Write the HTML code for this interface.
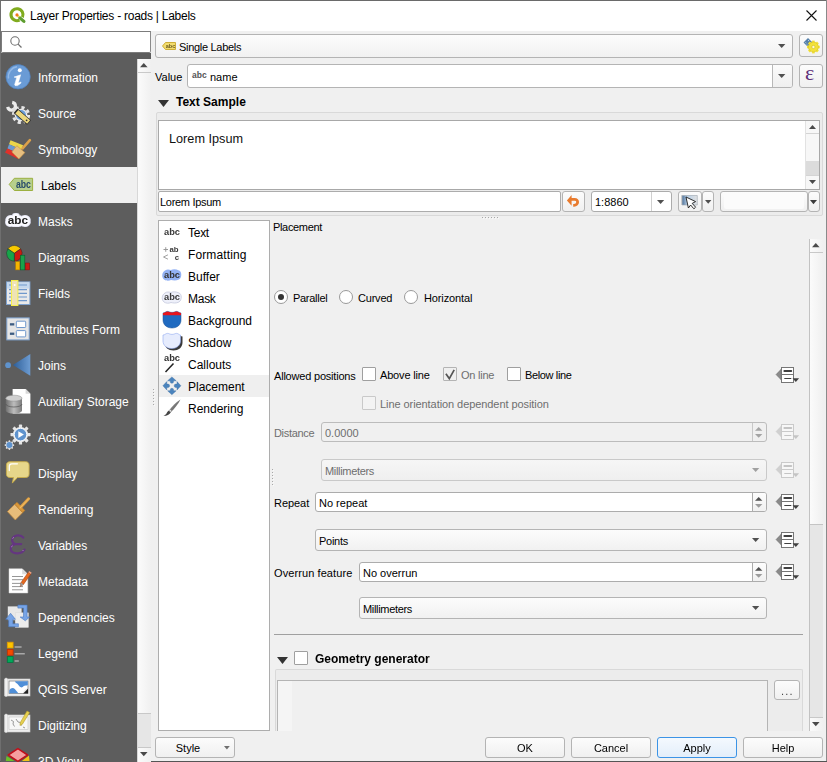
<!DOCTYPE html><html><head><meta charset="utf-8"><style>
*{box-sizing:border-box;margin:0;padding:0}
html,body{width:827px;height:762px;overflow:hidden;background:#6a6a6a}
body{font-family:"Liberation Sans",sans-serif;font-size:11px;color:#000;position:relative}
.a{position:absolute}
.t{position:absolute;white-space:nowrap;line-height:1}
.field{position:absolute;background:#fff;border:1px solid #acacac;border-radius:2px}
.combo{position:absolute;background:linear-gradient(#fcfcfc,#f1f1f1);border:1px solid #b4b4b4;border-radius:3px}
.btn{position:absolute;background:linear-gradient(#fcfcfc,#f0f0f0);border:1px solid #b4b4b4;border-radius:3px}
.dd{position:absolute;width:0;height:0;border-left:4.5px solid transparent;border-right:4.5px solid transparent;border-top:5px solid #3c3c3c}
.cb{position:absolute;width:14px;height:14px;background:#fff;border:1px solid #9f9f9f;border-radius:1px}
.rb{position:absolute;width:14px;height:14px;background:#fff;border:1px solid #9a9a9a;border-radius:50%}
.dis{color:#8d8d8d}
svg{position:absolute;overflow:visible;will-change:transform}
</style></head><body>
<div class="a" style="left:0px;top:1px;width:827px;height:760px;background:#f0f0f0"></div>
<div class="a" style="left:0px;top:1px;width:1px;height:761px;background:#6f6f6f"></div>
<div class="a" style="left:826px;top:0px;width:1px;height:762px;background:#8a8a8a"></div>
<div class="a" style="left:0px;top:761px;width:827px;height:1px;background:#555"></div>
<div class="a" style="left:1px;top:1px;width:825px;height:30px;background:#fff"></div>
<svg style="left:9px;top:8px" width="17" height="17" viewBox="0 0 17 17"><path d="M10.54 12.14A6 6 0 1 1 13.44 9.24" stroke="#80ab1e" stroke-width="3.1" fill="none"/><path d="M10.6 9.6L14.9 13.4" stroke="#5e9e30" stroke-width="3.2" stroke-linecap="round"/><circle cx="9.3" cy="8.3" r="1.2" fill="#e8e070"/><circle cx="8" cy="6.9" r="1.6" fill="#f07a1a"/></svg>
<div class="t" style="left:30px;top:10px;font-size:12px;letter-spacing:-0.25px">Layer Properties - roads | Labels</div>
<svg style="left:806px;top:10px" width="11" height="11" viewBox="0 0 11 11"><path d="M0.5 0.5L10.5 10.5M10.5 0.5L0.5 10.5" stroke="#111" stroke-width="1.1"/></svg>
<div class="a" style="left:1px;top:31px;width:150px;height:22px;background:#fff;border:1px solid #7c7c7c;border-right-color:#8a8a8a;border-radius:0 0 2px 2px"></div>
<svg style="left:9px;top:35px" width="14" height="14" viewBox="0 0 14 14"><circle cx="6" cy="6" r="4.2" fill="none" stroke="#707070" stroke-width="1.1"/><path d="M9.1 9.1l3.4 3.4" stroke="#707070" stroke-width="1.3"/></svg>
<div class="a" style="left:1px;top:53px;width:150px;height:709px;background:#5d5d5d"></div>
<div class="a" style="left:137px;top:59px;width:14px;height:703px;background:linear-gradient(90deg,#fbfbfb,#f0f0f0);border-left:1px solid #d8d8d8"></div>
<div class="a" style="left:138px;top:72px;width:13px;height:1px;background:#c9c9c9"></div>
<svg style="left:140.2px;top:62.8px" width="7.6" height="4.2" viewBox="0 0 7.6 4.2"><path d="M0 4.2L3.8 0L7.6 4.2z" fill="#4a4a4a"/></svg>
<div class="a" style="left:138px;top:713px;width:13px;height:35px;background:#e6e6e6;border-top:1px solid #c8c8c8;border-bottom:1px solid #c8c8c8"></div>
<svg style="left:140.2px;top:751.5px" width="7.6" height="4.2" viewBox="0 0 7.6 4.2"><path d="M0 0L3.8 4.2L7.6 0z" fill="#4a4a4a"/></svg>
<svg style="left:6px;top:64px" width="25" height="25" viewBox="0 0 25 25"><circle cx="12.1" cy="12.8" r="12.2" fill="#6a9bd5" stroke="#4f7fbb" stroke-width="0.7"/><path d="M2.6 14.5A9.8 9.8 0 0 1 11 2.8" stroke="#92b8e6" stroke-width="1.4" fill="none"/><circle cx="13.8" cy="6.3" r="2" fill="#fff"/><path d="M8 13.1L14.7 10.8 12.3 18.9 15.1 18 14.6 19.4 11.6 21.6 9.3 21.7 8.6 20.7 10.7 13.7z" fill="#fff" stroke="#fff" stroke-width="0.5" stroke-linejoin="round"/></svg>
<div class="t" style="left:38px;top:72px;font-size:12px;color:#fff">Information</div>
<svg style="left:6px;top:100px" width="25" height="25" viewBox="0 0 25 25"><circle cx="15" cy="15" r="7.6" fill="none" stroke="#e6e6e6" stroke-width="3" stroke-dasharray="3.2 2.8"/><circle cx="15" cy="15" r="6.3" fill="#ebebeb"/><circle cx="15" cy="15" r="5" fill="#6d9fd9"/><path d="M6.2 2.3A3.9 3.9 0 1 1 1.7 6.9" stroke="#ececec" stroke-width="3.2" fill="none"/><path d="M7 8.5l3 3" stroke="#e0e0e0" stroke-width="3.4"/><path d="M9.6 10.8l13.4 11.6" stroke="#2a2a2a" stroke-width="6"/><path d="M10.8 11.8l11.8 10.2" stroke="#ecd77c" stroke-width="4.6"/><circle cx="20.6" cy="20.3" r="0.9" fill="#333"/></svg>
<div class="t" style="left:38px;top:108px;font-size:12px;color:#fff">Source</div>
<svg style="left:6px;top:136px" width="25" height="25" viewBox="0 0 25 25"><path d="M4.5 4.2L17.1 9.2 15.5 13.8 3 8.3z" fill="#ecd64a"/><path d="M3 8.3L15.5 13.8 14 18.3 1.5 12.5z" fill="#6e9ad0"/><path d="M1.5 12.5L14 18.3 12.4 22.9-1 16.6z" fill="#e0302a"/><path d="M10.8 9.7L18.9 16.6 12.9 22.9 5.8 16z" fill="#e6bf80" stroke="#c89040" stroke-width="0.6"/><path d="M16.6 12.4L23.9 4.2" stroke="#dba04a" stroke-width="2.6" stroke-linecap="round"/></svg>
<div class="t" style="left:38px;top:144px;font-size:12px;color:#fff">Symbology</div>
<div class="a" style="left:1px;top:167px;width:136px;height:36px;background:#f0f0f0"></div>
<svg style="left:6px;top:172px" width="25" height="25" viewBox="0 0 25 25"><path d="M8.3 6.3h18.3v12.2H8.3L3.2 12.4z" fill="#b7cf8c" stroke="#9cb040" stroke-width="1"/><text x="17.4" y="16.3" font-family="Liberation Sans" font-weight="bold" font-size="10.5" fill="#264a6a" text-anchor="middle" textLength="15" lengthAdjust="spacingAndGlyphs">abc</text></svg>
<div class="t" style="left:41px;top:180px;font-size:12px;color:#000">Labels</div>
<svg style="left:6px;top:208px" width="25" height="25" viewBox="0 0 25 25"><text x="1.7" y="15.6" font-family="Liberation Sans" font-weight="bold" font-size="11.5" fill="#fff" stroke="#dfe0f0" stroke-width="6" stroke-linejoin="round" textLength="20.3" lengthAdjust="spacingAndGlyphs">abc</text><text x="1.7" y="15.6" font-family="Liberation Sans" font-weight="bold" font-size="11.5" fill="#fff" stroke="#fafaff" stroke-width="4.4" stroke-linejoin="round" textLength="20.3" lengthAdjust="spacingAndGlyphs">abc</text><text x="1.7" y="15.6" font-family="Liberation Sans" font-weight="bold" font-size="11.5" fill="#222" textLength="20.3" lengthAdjust="spacingAndGlyphs">abc</text></svg>
<div class="t" style="left:38px;top:216px;font-size:12px;color:#fff">Masks</div>
<svg style="left:6px;top:244px" width="25" height="25" viewBox="0 0 25 25"><path d="M8.3 9.3L1.91 4.83A7.8 7.8 0 0 1 14.69 4.83z" fill="#f7c900" stroke="#2a2a2a" stroke-width="0.5"/><path d="M8.3 9.3L14.69 4.83A7.8 7.8 0 0 1 8.30 17.10z" fill="#cc1b10" stroke="#2a2a2a" stroke-width="0.5"/><path d="M8.3 9.3L8.30 17.10A7.8 7.8 0 0 1 1.91 4.83z" fill="#17a54a" stroke="#2a2a2a" stroke-width="0.5"/><rect x="9.6" y="17.6" width="4.2" height="8.3" fill="#f5b400" stroke="#b07a00" stroke-width="0.5"/><rect x="14.4" y="11.2" width="4.4" height="14.7" fill="#1aa14b" stroke="#0b5e2a" stroke-width="0.6"/><rect x="19.3" y="19" width="4.3" height="6.9" fill="#c81a14" stroke="#801010" stroke-width="0.5"/></svg>
<div class="t" style="left:38px;top:252px;font-size:12px;color:#fff">Diagrams</div>
<svg style="left:6px;top:280px" width="25" height="25" viewBox="0 0 25 25"><rect x="0.5" y="1.9" width="23.4" height="22.6" fill="#e9e9ea" stroke="#7ea2cf" stroke-width="1"/><rect x="1" y="2.4" width="22.4" height="6.2" fill="#c4d8ee"/><path d="M3 5h18M3 9.7h18M3 13.3h18M3 17h18M3 20.7h18" stroke="#6f98cc" stroke-width="1.2"/><rect x="5.5" y="0.5" width="6.4" height="25" fill="#efe3b4" stroke="#f4ee4a" stroke-width="1"/><circle cx="8.7" cy="5" r="1" fill="#fff"/></svg>
<div class="t" style="left:38px;top:288px;font-size:12px;color:#fff">Fields</div>
<svg style="left:6px;top:316px" width="25" height="25" viewBox="0 0 25 25"><rect x="0.8" y="1.9" width="22.4" height="22" fill="#e6e6e6" stroke="#7ea2cf" stroke-width="1"/><rect x="3.9" y="7.2" width="4.4" height="2.3" fill="#3d5c82"/><rect x="3.9" y="16.6" width="4.4" height="2.3" fill="#3d5c82"/><rect x="10.3" y="5.2" width="9.4" height="6.3" rx="0.8" fill="#fff" stroke="#6f98cc" stroke-width="1"/><rect x="10.3" y="14.6" width="9.4" height="6.3" rx="0.8" fill="#fff" stroke="#6f98cc" stroke-width="1"/></svg>
<div class="t" style="left:38px;top:324px;font-size:12px;color:#fff">Attributes Form</div>
<svg style="left:6px;top:352px" width="25" height="25" viewBox="0 0 25 25"><defs><linearGradient id="gj" x1="0" y1="0" x2="1" y2="0"><stop offset="0" stop-color="#2d5e98"/><stop offset="1" stop-color="#6d9cd2"/></linearGradient></defs><path d="M6.9 13L24.3 2.1V23.7z" fill="url(#gj)"/><circle cx="2.1" cy="13.2" r="2.9" fill="#5f93cd"/></svg>
<div class="t" style="left:38px;top:360px;font-size:12px;color:#fff">Joins</div>
<svg style="left:6px;top:388px" width="25" height="25" viewBox="0 0 25 25"><path d="M6.6 0.9H19.6L24.4 5.7V25.6H6.6z" fill="#fff"/><path d="M19.6 0.9V5.7H24.4z" fill="#d8d8d8"/><defs><linearGradient id="gdb" x1="0" y1="0" x2="1" y2="0"><stop offset="0" stop-color="#6f6f6f"/><stop offset="0.5" stop-color="#bdbdbd"/><stop offset="1" stop-color="#7a7a7a"/></linearGradient></defs><path d="M-0.2 10.2V22.4A8.1 3.2 0 0 0 16 22.4V10.2z" fill="url(#gdb)"/><path d="M-0.2 16A8.1 3 0 0 0 16 16" stroke="#555" stroke-width="0.7" fill="none"/><ellipse cx="7.9" cy="10.2" rx="8.1" ry="3" fill="#d0d0d0" stroke="#888" stroke-width="0.5"/></svg>
<div class="t" style="left:38px;top:396px;font-size:12px;color:#fff">Auxiliary Storage</div>
<svg style="left:6px;top:424px" width="25" height="25" viewBox="0 0 25 25"><circle cx="14.5" cy="10.6" r="7.6" fill="#e6e6e6"/><rect x="12.90" y="0.60" width="3.2" height="3.40" rx="0.6" fill="#e6e6e6" transform="rotate(0.0 14.5 10.6)"/><rect x="12.90" y="0.60" width="3.2" height="3.40" rx="0.6" fill="#e6e6e6" transform="rotate(45.0 14.5 10.6)"/><rect x="12.90" y="0.60" width="3.2" height="3.40" rx="0.6" fill="#e6e6e6" transform="rotate(90.0 14.5 10.6)"/><rect x="12.90" y="0.60" width="3.2" height="3.40" rx="0.6" fill="#e6e6e6" transform="rotate(135.0 14.5 10.6)"/><rect x="12.90" y="0.60" width="3.2" height="3.40" rx="0.6" fill="#e6e6e6" transform="rotate(180.0 14.5 10.6)"/><rect x="12.90" y="0.60" width="3.2" height="3.40" rx="0.6" fill="#e6e6e6" transform="rotate(225.0 14.5 10.6)"/><rect x="12.90" y="0.60" width="3.2" height="3.40" rx="0.6" fill="#e6e6e6" transform="rotate(270.0 14.5 10.6)"/><rect x="12.90" y="0.60" width="3.2" height="3.40" rx="0.6" fill="#e6e6e6" transform="rotate(315.0 14.5 10.6)"/><circle cx="14.5" cy="10.6" r="6.3" fill="#5f93cd" stroke="#fff" stroke-width="0.9"/><path d="M12.3 7.2V14l5.6-3.4z" fill="#fff"/><circle cx="3.4" cy="21.1" r="3.6" fill="#e0e0e0"/><rect x="2.60" y="16.30" width="1.6" height="2.20" rx="0.6" fill="#e0e0e0" transform="rotate(0.0 3.4 21.1)"/><rect x="2.60" y="16.30" width="1.6" height="2.20" rx="0.6" fill="#e0e0e0" transform="rotate(45.0 3.4 21.1)"/><rect x="2.60" y="16.30" width="1.6" height="2.20" rx="0.6" fill="#e0e0e0" transform="rotate(90.0 3.4 21.1)"/><rect x="2.60" y="16.30" width="1.6" height="2.20" rx="0.6" fill="#e0e0e0" transform="rotate(135.0 3.4 21.1)"/><rect x="2.60" y="16.30" width="1.6" height="2.20" rx="0.6" fill="#e0e0e0" transform="rotate(180.0 3.4 21.1)"/><rect x="2.60" y="16.30" width="1.6" height="2.20" rx="0.6" fill="#e0e0e0" transform="rotate(225.0 3.4 21.1)"/><rect x="2.60" y="16.30" width="1.6" height="2.20" rx="0.6" fill="#e0e0e0" transform="rotate(270.0 3.4 21.1)"/><rect x="2.60" y="16.30" width="1.6" height="2.20" rx="0.6" fill="#e0e0e0" transform="rotate(315.0 3.4 21.1)"/><circle cx="3.4" cy="21.1" r="3" fill="#5f93cd"/></svg>
<div class="t" style="left:38px;top:432px;font-size:12px;color:#fff">Actions</div>
<svg style="left:6px;top:460px" width="25" height="25" viewBox="0 0 25 25"><path d="M4 1.7h15.5c2.5 0 3.6 1.3 3.6 3.6v8.6c0 2.3-1.1 3.6-3.6 3.6H11.5L6.3 23.1 7.5 17.5H4C1.6 17.5.4 16.2.4 13.9V5.3C.4 3 1.6 1.7 4 1.7z" fill="#e6d68a" stroke="#c8ad48" stroke-width="0.9"/><path d="M3.3 10.5V6.3c0-1.6.9-2.5 2.6-2.5h5.5" stroke="#fff" stroke-width="1.3" fill="none" stroke-linecap="round"/></svg>
<div class="t" style="left:38px;top:468px;font-size:12px;color:#fff">Display</div>
<svg style="left:6px;top:496px" width="25" height="25" viewBox="0 0 25 25"><path d="M1.4 15.6L8.8 8.3 16.7 16.6 9.3 24z" fill="#e8bd7a" stroke="#c48a3c" stroke-width="0.7"/><path d="M8.8 8.3L11 6.2 18.9 14.5 16.7 16.6z" fill="#d99638" stroke="#b87a28" stroke-width="0.5"/><path d="M14.2 11.7L22.6 2.8" stroke="#e0a040" stroke-width="3" stroke-linecap="round"/><path d="M14.2 11.7L22.6 2.8" stroke="#f0c070" stroke-width="1" stroke-linecap="round"/></svg>
<div class="t" style="left:38px;top:504px;font-size:12px;color:#fff">Rendering</div>
<svg style="left:6px;top:532px" width="25" height="25" viewBox="0 0 25 25"><path d="M17.3 5.6C16 3.8 13.5 3.3 11.6 3.4 7.8 3.7 5.9 6 6.1 8.4 6.3 10.6 7.8 11.8 9.6 12.1H15.2M9.6 12.1C6.2 12.6 4.6 14.8 4.8 17.2 5.2 20.2 8.2 21.5 11.5 21.4 15 21.3 17.4 19.9 18.6 17.6" stroke="#643680" stroke-width="2.2" fill="none" stroke-linecap="round"/><path d="M6.5 6.5l1.5-1.2M5.2 15l1.5-1.2M16.5 19l1-1" stroke="#a87cc0" stroke-width="1"/></svg>
<div class="t" style="left:38px;top:540px;font-size:12px;color:#fff">Variables</div>
<svg style="left:6px;top:568px" width="25" height="25" viewBox="0 0 25 25"><path d="M3 0.7H16.2L21.8 6.3V25H3z" fill="#fff" stroke="#d0d0d0" stroke-width="0.5"/><path d="M16.2 0.7V6.3H21.8z" fill="#dcdcdc"/><path d="M6 8.5h11M6 11.7h11M6 15.4h11M6 18.6h11M6 21.8h11" stroke="#8a8a8a" stroke-width="0.9"/><path d="M14.2 18.6L15 14.6 22.3 4.2 24.8 6 17.5 16.4z" fill="#e5691e" stroke="#9a3a10" stroke-width="0.5"/><path d="M14.2 18.6L15 14.6 17.5 16.4z" fill="#999"/><path d="M22.3 4.2L23.2 3 25.7 4.8 24.8 6z" fill="#f0a080"/></svg>
<div class="t" style="left:38px;top:576px;font-size:12px;color:#fff">Metadata</div>
<svg style="left:6px;top:604px" width="25" height="25" viewBox="0 0 25 25"><rect x="1.8" y="2.4" width="13.8" height="13.8" fill="#e8e8e8"/><rect x="9.2" y="8.8" width="13.3" height="14.7" fill="#ececec" stroke="#d8d8d8" stroke-width="0.4"/><path d="M11.9 1.1H21.1V13H23.6L19.3 16.8 14.1 13H17.5V4.1H11.9z" fill="#77a4e6" stroke="#4a78c0" stroke-width="0.6"/><path d="M4.6 9.3L9.4 15.3H6.9V19.8H12.4V22.8H2.7V15.3H-0.3z" fill="#77a4e6" stroke="#4a78c0" stroke-width="0.6"/></svg>
<div class="t" style="left:38px;top:612px;font-size:12px;color:#fff">Dependencies</div>
<svg style="left:6px;top:640px" width="25" height="25" viewBox="0 0 25 25"><rect x="1.3" y="2.2" width="5.8" height="5.8" fill="#fdc400" stroke="#e09a00" stroke-width="0.8"/><rect x="1.3" y="9.4" width="5.8" height="5.8" fill="#f44a00" stroke="#c03000" stroke-width="0.8"/><rect x="1.3" y="16.6" width="5.8" height="5.8" fill="#00a85a" stroke="#007840" stroke-width="0.8"/><path d="M8.6 7h7M8.6 13.8h10.2M8.6 21h4.2" stroke="#a8a8a8" stroke-width="1.6"/></svg>
<div class="t" style="left:38px;top:648px;font-size:12px;color:#fff">Legend</div>
<svg style="left:6px;top:676px" width="25" height="25" viewBox="0 0 25 25"><rect x="-1.2" y="3" width="25.2" height="17" fill="#ededed" stroke="#d0d0d0" stroke-width="0.6"/><rect x="-1.2" y="2" width="2.6" height="18.5" rx="1.2" fill="#f4f4f4" stroke="#c8c8c8" stroke-width="0.5"/><rect x="3" y="5" width="19" height="12.5" fill="#fff" stroke="#777" stroke-width="0.7"/><path d="M9 5.3h12.8v3.6c-1.5 1-3 .2-4 1.2s-2 2-3.5 1-2-2.5-3-3.3-2-1-2.3-2.5zM3.3 17.2v-3c1.5-2.5 4-3 5.5-1.2s2.5 3 3.5 4.2z" fill="#4f8fd8"/><path d="M17 17.4l5-5v5z" fill="#222"/><path d="M17 17.4l5-5c-2 0-4.5 2-5 5z" fill="#ddd"/></svg>
<div class="t" style="left:38px;top:684px;font-size:12px;color:#fff">QGIS Server</div>
<svg style="left:6px;top:712px" width="25" height="25" viewBox="0 0 25 25"><rect x="-1.2" y="3" width="25.2" height="17" fill="#ededed" stroke="#d0d0d0" stroke-width="0.6"/><rect x="-1.2" y="2" width="2.6" height="18.5" rx="1.2" fill="#f4f4f4" stroke="#c8c8c8" stroke-width="0.5"/><rect x="3" y="5" width="19" height="12.5" fill="#f7f7f7" stroke="#bbb" stroke-width="0.5"/><path d="M5 8l2.5 1.5-.5 2.5 1.5 2.5M10 7l2 3 2.5.5 1 3M17 15l2 1" stroke="#999" stroke-width="1" fill="none"/><path d="M21 -1l2.6 1.6-7.2 11.6-2.4 1.3.2-2.8z" fill="#e6d050" stroke="#b59c2a" stroke-width="0.6"/></svg>
<div class="t" style="left:38px;top:720px;font-size:12px;color:#fff">Digitizing</div>
<svg style="left:6px;top:748px" width="25" height="25" viewBox="0 0 25 25"><path d="M-0.2 13L0.5 8 8.5 13z" fill="#6cc02a"/><path d="M23.5 13L23 7.5 15.8 13z" fill="#f0c419"/><path d="M11.9 0.6L21.6 7 11.9 13.4 2.2 7z" fill="#f4a0a0" stroke="#c0101a" stroke-width="1.5" stroke-linejoin="round"/></svg>
<div class="t" style="left:38px;top:756px;font-size:12px;color:#fff">3D View</div>
<div class="combo" style="left:155px;top:34px;width:638px;height:24px"></div>
<svg style="left:162px;top:42px" width="14" height="8" viewBox="0 0 14 8"><path d="M3.5 .5h10v7h-10L.5 4z" fill="#f2dc6e" stroke="#c9a72a" stroke-width="0.9"/><text x="8.5" y="6.3" font-family="Liberation Sans" font-weight="bold" font-size="5.5" fill="#6a5a20" text-anchor="middle">abc</text></svg>
<div class="t" style="left:179px;top:42px;font-size:11px;letter-spacing:-0.3px">Single Labels</div>
<svg style="left:777.8px;top:44px" width="7.4" height="4" viewBox="0 0 7.4 4"><path d="M0 0L3.7 4L7.4 0z" fill="#505050"/></svg>
<div class="btn" style="left:799px;top:34px;width:24px;height:23px"></div>
<svg style="left:803px;top:37px" width="17" height="17" viewBox="0 0 17 17"><path d="M0.5 5.5L5 1l4.8 4.8-4.5 4.5z" fill="#5580aa"/><path d="M2.5 5.3l1 1M5 3l1 1M4 7.5l1 1M7 5l1 1" stroke="#c8d8e8" stroke-width="0.9"/><rect x="9.1" y="3.6" width="2.6" height="2.6" fill="#f2e23a" transform="rotate(0 10.4 10)"/><rect x="9.1" y="3.6" width="2.6" height="2.6" fill="#f2e23a" transform="rotate(45 10.4 10)"/><rect x="9.1" y="3.6" width="2.6" height="2.6" fill="#f2e23a" transform="rotate(90 10.4 10)"/><rect x="9.1" y="3.6" width="2.6" height="2.6" fill="#f2e23a" transform="rotate(135 10.4 10)"/><rect x="9.1" y="3.6" width="2.6" height="2.6" fill="#f2e23a" transform="rotate(180 10.4 10)"/><rect x="9.1" y="3.6" width="2.6" height="2.6" fill="#f2e23a" transform="rotate(225 10.4 10)"/><rect x="9.1" y="3.6" width="2.6" height="2.6" fill="#f2e23a" transform="rotate(270 10.4 10)"/><rect x="9.1" y="3.6" width="2.6" height="2.6" fill="#f2e23a" transform="rotate(315 10.4 10)"/><circle cx="10.4" cy="10" r="5" fill="#f2e23a" stroke="#d8c020" stroke-width="0.6"/><circle cx="10.4" cy="10" r="1.6" fill="#fffbd0" stroke="#c8b020" stroke-width="0.5"/></svg>
<div class="t" style="left:155px;top:72px;font-size:11px">Value</div>
<div class="field" style="left:187px;top:64px;width:606px;height:24px;border-color:#b4b4b4;border-radius:3px"></div>
<div class="a" style="left:773px;top:65px;width:19px;height:22px;background:linear-gradient(#fbfbfb,#efefef);border-radius:0 2px 2px 0"></div>
<div class="a" style="left:772px;top:65px;width:1px;height:22px;background:#b8b8b8"></div>
<svg style="left:777.8px;top:74px" width="7.4" height="4" viewBox="0 0 7.4 4"><path d="M0 0L3.7 4L7.4 0z" fill="#505050"/></svg>
<div class="t" style="left:192px;top:71px;font-size:8.5px;font-weight:bold;color:#555">abc</div>
<div class="t" style="left:210px;top:72px;font-size:11px">name</div>
<div class="btn" style="left:799px;top:64px;width:24px;height:24px"></div>
<div class="t" style="left:805px;top:62px;font-family:Liberation Serif;font-size:22px;color:#5e2f78">&#949;</div>
<svg style="left:158px;top:100px" width="11" height="7" viewBox="0 0 11 7"><path d="M0 0h11L5.5 7z" fill="#333"/></svg>
<div class="t" style="left:176px;top:96px;font-size:12px;font-weight:bold">Text Sample</div>
<div class="a" style="left:156px;top:112px;width:667px;height:104px;background:#ececec;border:1px solid #d9d9d9;border-radius:2px"></div>
<div class="a" style="left:158px;top:120px;width:662px;height:70px;background:#fff;border:1px solid #a8a8a8"></div>
<div class="t" style="left:169px;top:133px;font-size:12.7px;color:#111">Lorem Ipsum</div>
<div class="a" style="left:805px;top:121px;width:14px;height:68px;background:#f7f7f7;border-left:1px solid #e2e2e2"></div>
<svg style="left:808.5px;top:125.3px" width="7" height="4" viewBox="0 0 7 4"><path d="M0 4L3.5 0L7 4z" fill="#4a4a4a"/></svg>
<div class="a" style="left:806px;top:161px;width:13px;height:15px;background:#dcdcdc"></div>
<div class="a" style="left:806px;top:133px;width:13px;height:1px;background:#d4d4d4"></div>
<div class="a" style="left:806px;top:175px;width:13px;height:1px;background:#d4d4d4"></div>
<svg style="left:808.5px;top:180.3px" width="7" height="4" viewBox="0 0 7 4"><path d="M0 0L3.5 4L7 0z" fill="#4a4a4a"/></svg>
<div class="field" style="left:158px;top:191px;width:403px;height:21px"></div>
<div class="t" style="left:160px;top:197px;font-size:11px;letter-spacing:-0.3px">Lorem Ipsum</div>
<div class="btn" style="left:562px;top:191px;width:23px;height:21px"></div>
<svg style="left:565px;top:193px" width="16" height="16" viewBox="0 0 16 16"><path d="M1.9 7.4L6.6 2V4.9H9.5C12.5 4.9 14 6.8 14 9 14 11.5 12 13.7 9 13.7H8.2V11H9C10.3 11 11.2 10.2 11.2 9 11.2 7.8 10.3 7.8 9.3 7.8H6.6V12.7z" fill="#e87b2e"/></svg>
<div class="field" style="left:591px;top:191px;width:81px;height:21px;border-radius:3px"></div>
<div class="a" style="left:651px;top:192px;width:1px;height:19px;background:#d0d0d0"></div>
<div class="t" style="left:595px;top:197px;font-size:11px">1:8860</div>
<svg style="left:657px;top:199.5px" width="7.2" height="4" viewBox="0 0 7.2 4"><path d="M0 0L3.6 4L7.2 0z" fill="#505050"/></svg>
<div class="btn" style="left:678px;top:191px;width:24px;height:21px"></div>
<svg style="left:681px;top:194px" width="20" height="16" viewBox="0 0 20 16"><defs><linearGradient id="gp" x1="0" y1="0" x2="1" y2="0"><stop offset="0" stop-color="#4a6f98"/><stop offset="0.35" stop-color="#b8cfe6"/><stop offset="1" stop-color="#e2e2e2"/></linearGradient></defs><path d="M1 1.5h15.3v9.5H1z" fill="url(#gp)" stroke="#9aa4ae" stroke-width="0.6"/><path d="M0.6 1.2v9.8" stroke="#ccc" stroke-width="1.2"/><path d="M5 3L14.6 7.6 11.2 9.4 14.6 13.2 12.9 14.8 9.6 11 7.4 14z" fill="#fff" stroke="#1a1a1a" stroke-width="0.9" stroke-linejoin="round"/></svg>
<div class="btn" style="left:702px;top:191px;width:12px;height:21px"></div>
<svg style="left:705px;top:199.8px" width="6.4" height="3.8" viewBox="0 0 6.4 3.8"><path d="M0 0L3.2 3.8L6.4 0z" fill="#505050"/></svg>
<div class="btn" style="left:720px;top:191px;width:88px;height:21px"></div>
<div class="a" style="left:724px;top:194px;width:80px;height:15px;background:#fbfbfb;border-radius:2px"></div>
<div class="btn" style="left:808px;top:191px;width:12px;height:21px"></div>
<svg style="left:810.3px;top:199.5px" width="7" height="4.2" viewBox="0 0 7 4.2"><path d="M0 0L3.5 4.2L7 0z" fill="#3c3c3c"/></svg>
<div class="a" style="left:482px;top:217px;width:1px;height:1px;background:#a8a8a8"></div>
<div class="a" style="left:483px;top:218px;width:1px;height:1px;background:#fafafa"></div>
<div class="a" style="left:153px;top:389px;width:1px;height:1px;background:#a8a8a8"></div>
<div class="a" style="left:154px;top:390px;width:1px;height:1px;background:#fafafa"></div>
<div class="a" style="left:272px;top:469px;width:1px;height:1px;background:#a8a8a8"></div>
<div class="a" style="left:273px;top:470px;width:1px;height:1px;background:#fafafa"></div>
<div class="a" style="left:485px;top:217px;width:1px;height:1px;background:#a8a8a8"></div>
<div class="a" style="left:486px;top:218px;width:1px;height:1px;background:#fafafa"></div>
<div class="a" style="left:153px;top:392px;width:1px;height:1px;background:#a8a8a8"></div>
<div class="a" style="left:154px;top:393px;width:1px;height:1px;background:#fafafa"></div>
<div class="a" style="left:272px;top:472px;width:1px;height:1px;background:#a8a8a8"></div>
<div class="a" style="left:273px;top:473px;width:1px;height:1px;background:#fafafa"></div>
<div class="a" style="left:488px;top:217px;width:1px;height:1px;background:#a8a8a8"></div>
<div class="a" style="left:489px;top:218px;width:1px;height:1px;background:#fafafa"></div>
<div class="a" style="left:153px;top:395px;width:1px;height:1px;background:#a8a8a8"></div>
<div class="a" style="left:154px;top:396px;width:1px;height:1px;background:#fafafa"></div>
<div class="a" style="left:272px;top:475px;width:1px;height:1px;background:#a8a8a8"></div>
<div class="a" style="left:273px;top:476px;width:1px;height:1px;background:#fafafa"></div>
<div class="a" style="left:491px;top:217px;width:1px;height:1px;background:#a8a8a8"></div>
<div class="a" style="left:492px;top:218px;width:1px;height:1px;background:#fafafa"></div>
<div class="a" style="left:153px;top:398px;width:1px;height:1px;background:#a8a8a8"></div>
<div class="a" style="left:154px;top:399px;width:1px;height:1px;background:#fafafa"></div>
<div class="a" style="left:272px;top:478px;width:1px;height:1px;background:#a8a8a8"></div>
<div class="a" style="left:273px;top:479px;width:1px;height:1px;background:#fafafa"></div>
<div class="a" style="left:494px;top:217px;width:1px;height:1px;background:#a8a8a8"></div>
<div class="a" style="left:495px;top:218px;width:1px;height:1px;background:#fafafa"></div>
<div class="a" style="left:153px;top:401px;width:1px;height:1px;background:#a8a8a8"></div>
<div class="a" style="left:154px;top:402px;width:1px;height:1px;background:#fafafa"></div>
<div class="a" style="left:272px;top:481px;width:1px;height:1px;background:#a8a8a8"></div>
<div class="a" style="left:273px;top:482px;width:1px;height:1px;background:#fafafa"></div>
<div class="a" style="left:497px;top:217px;width:1px;height:1px;background:#a8a8a8"></div>
<div class="a" style="left:498px;top:218px;width:1px;height:1px;background:#fafafa"></div>
<div class="a" style="left:153px;top:404px;width:1px;height:1px;background:#a8a8a8"></div>
<div class="a" style="left:154px;top:405px;width:1px;height:1px;background:#fafafa"></div>
<div class="a" style="left:272px;top:484px;width:1px;height:1px;background:#a8a8a8"></div>
<div class="a" style="left:273px;top:485px;width:1px;height:1px;background:#fafafa"></div>
<div class="a" style="left:158px;top:220px;width:112px;height:511px;background:#fff;border:1px solid #adadad"></div>
<svg style="left:162px;top:222px" width="20" height="20" viewBox="0 0 20 20"><text x="2" y="12.7" font-family="Liberation Sans" font-weight="bold" font-size="8.4" fill="#3a3a3a" textLength="16" lengthAdjust="spacingAndGlyphs">abc</text></svg>
<div class="t" style="left:188px;top:227px;font-size:12px;letter-spacing:-0.27px">Text</div>
<svg style="left:162px;top:244px" width="20" height="20" viewBox="0 0 20 20"><path d="M1.5 5.5h4.5M3.75 3.2v4.6" stroke="#999" stroke-width="1"/><text x="7.5" y="8.4" font-family="Liberation Sans" font-weight="bold" font-size="7.8" fill="#3a3a3a">ab</text><path d="M6 10.8l-4.5 2.2 4.5 2.2" stroke="#999" stroke-width="0.9" fill="none"/><text x="12.8" y="16" font-family="Liberation Sans" font-weight="bold" font-size="7.8" fill="#3a3a3a">c</text></svg>
<div class="t" style="left:188px;top:249px;font-size:12px;letter-spacing:0.12px">Formatting</div>
<svg style="left:162px;top:266px" width="20" height="20" viewBox="0 0 20 20"><path d="M3 4.5c2-1.5 4-1 6 -0.5c2-1 5-1 8 .5c3 1 3 7 0 9c-3 1.5-6 1-8 .5c-2 1-5 1-7-.5c-2.5-2-2.5-7 1-9z" fill="#93b2f4"/><text x="2" y="11.8" font-family="Liberation Sans" font-weight="bold" font-size="8.4" fill="#333" textLength="16" lengthAdjust="spacingAndGlyphs">abc</text></svg>
<div class="t" style="left:188px;top:271px;font-size:12px;letter-spacing:0px">Buffer</div>
<svg style="left:162px;top:288px" width="20" height="20" viewBox="0 0 20 20"><path d="M3 5c2-1.5 4-1 6 -0.5c2-1 5-1 8 .5c3 1 3 7 0 9c-3 1.5-6 1-8 .5c-2 1-5 1-7-.5c-2.5-2-2.5-7 1-9z" fill="#eef0fa" stroke="#c4c8dc" stroke-width="0.8"/><text x="2" y="12.2" font-family="Liberation Sans" font-weight="bold" font-size="8.4" fill="#3a3a3a" textLength="16" lengthAdjust="spacingAndGlyphs">abc</text></svg>
<div class="t" style="left:188px;top:293px;font-size:12px;letter-spacing:-0.27px">Mask</div>
<svg style="left:162px;top:310px" width="20" height="20" viewBox="0 0 20 20"><path d="M1 3c2 0 2.5-1.6 4.5-1.6S7.5 2.4 10 2.4s2.5-1 4.5-1S17 3 19 3v7c0 5-4 8-9 8s-9-3-9-8z" fill="#1f6ac0" stroke="#184f90" stroke-width="0.5"/><path d="M1 3c2 0 2.5-1.6 4.5-1.6S7.5 2.4 10 2.4s2.5-1 4.5-1S17 3 19 3v2.2H1z" fill="#e8141c"/></svg>
<div class="t" style="left:188px;top:315px;font-size:12px;letter-spacing:0px">Background</div>
<svg style="left:162px;top:332px" width="20" height="20" viewBox="0 0 20 20"><path d="M2.5 4.5c2 0 2.5-1.6 4.5-1.6s2 1 4.5 1 2.5-1 4.5-1 2.5 1.6 4.5 1.6v6c0 5-4 8-9 8s-9-3-9-8z" fill="#3a3a3a"/><path d="M1 3c2 0 2.5-1.6 4.5-1.6S7.5 2.4 10 2.4s2.5-1 4.5-1S17 3 18.5 3v6c0 4.5-4 7.5-8.8 7.5S1 13.5 1 9z" fill="#e6ecfd" stroke="#8fa8f0" stroke-width="0.6"/></svg>
<div class="t" style="left:188px;top:337px;font-size:12px;letter-spacing:0px">Shadow</div>
<svg style="left:162px;top:354px" width="20" height="20" viewBox="0 0 20 20"><text x="2" y="7" font-family="Liberation Sans" font-weight="bold" font-size="8.4" fill="#333" textLength="16" lengthAdjust="spacingAndGlyphs">abc</text><path d="M11.5 9.5L3.5 18" stroke="#222" stroke-width="1.5"/></svg>
<div class="t" style="left:188px;top:359px;font-size:12px;letter-spacing:0px">Callouts</div>
<div class="a" style="left:159px;top:375px;width:110px;height:22px;background:#efefef"></div>
<svg style="left:162px;top:376px" width="20" height="20" viewBox="0 0 20 20"><path d="M9.9 0.9L14.2 4.8H11.6V5.6a1.7 1.7 0 0 1-3.4 0V4.8H5.6z M0.9 9.8L4.8 5.6V8.1H5.9a1.7 1.7 0 0 1 0 3.4H4.8V14z M18.9 9.8L15 5.6V8.1H13.9a1.7 1.7 0 0 0 0 3.4H15V14z M9.9 18.7L14.2 14.8H11.6V14a1.7 1.7 0 0 0-3.4 0V14.8H5.6z" fill="#4b84bd" stroke="#3c6fa5" stroke-width="0.4"/></svg>
<div class="t" style="left:188px;top:381px;font-size:12px;letter-spacing:0px">Placement</div>
<svg style="left:162px;top:398px" width="20" height="20" viewBox="0 0 20 20"><defs><linearGradient id="gr" x1="0" y1="0" x2="1" y2="1"><stop offset="0" stop-color="#9a9a9a"/><stop offset="1" stop-color="#555"/></linearGradient></defs><path d="M18.5 1.5c-2 4-6 9-9.5 12.5l-2-1.6c3-4 7-8 11.5-10.9z" fill="url(#gr)"/><path d="M7 12.4l2 1.6c-1.5 2.5-4 4-7.5 4 1-.5 2.2-1.2 3-2.5.7-1.5 1.2-2.7 2.5-3.1z" fill="#444"/><circle cx="8.3" cy="12.8" r="1" fill="#ddd"/></svg>
<div class="t" style="left:188px;top:403px;font-size:12px;letter-spacing:0px">Rendering</div>
<div class="t" style="left:273px;top:222px;font-size:11px;letter-spacing:-0.33px">Placement</div>
<div class="rb" style="left:274px;top:290px"></div>
<div class="a" style="left:278px;top:294px;width:6px;height:6px;background:#333;border-radius:50%"></div>
<div class="t" style="left:293px;top:293px;font-size:11px;letter-spacing:-0.29px">Parallel</div>
<div class="rb" style="left:339px;top:290px"></div>
<div class="t" style="left:358px;top:293px;font-size:11px;letter-spacing:-0.2px">Curved</div>
<div class="rb" style="left:404px;top:290px"></div>
<div class="t" style="left:424px;top:293px;font-size:11px;letter-spacing:-0.13px">Horizontal</div>
<div class="t" style="left:274px;top:371px;font-size:11px;letter-spacing:-0.2px">Allowed positions</div>
<div class="cb" style="left:362px;top:367px"></div>
<div class="t" style="left:380px;top:370px;font-size:11px;letter-spacing:-0.17px">Above line</div>
<div class="cb" style="left:443px;top:367px;background:#f0f0f0;border-color:#b4b4b4"></div>
<svg style="left:443px;top:367px" width="14" height="14" viewBox="0 0 14 14"><path d="M2.9 6.8L6.3 11.6 11.2 2.9" stroke="#555" stroke-width="1.7" fill="none"/></svg>
<div class="t" style="left:461px;top:370px;font-size:11px;color:#6e6e6e;letter-spacing:-0.23px">On line</div>
<div class="cb" style="left:507px;top:367px"></div>
<div class="t" style="left:525px;top:370px;font-size:11px;letter-spacing:-0.36px">Below line</div>
<svg style="left:776px;top:367px" width="24" height="17" viewBox="0 0 24 17"><path d="M0 7.6L5.3 2V13z" fill="#8a8a8a" stroke="#555" stroke-width="0.4"/><rect x="5.5" y="0.5" width="12" height="15" fill="#fff" stroke="#767676" stroke-width="1"/><path d="M5.5 7.5h12" stroke="#767676" stroke-width="1"/><path d="M8.3 4h7" stroke="#404040" stroke-width="1.8" stroke-linecap="round"/><path d="M8.3 11.5h7" stroke="#404040" stroke-width="1"/><path d="M16.5 11.2h6.6l-3.3 3.8z" fill="#404040"/></svg>
<div class="cb" style="left:362px;top:396px;background:#f3f3f3;border-color:#c9c9c9"></div>
<div class="t" style="left:380px;top:399px;font-size:11px;color:#6e6e6e;letter-spacing:-0.07px">Line orientation dependent position</div>
<div class="t" style="left:274px;top:428px;font-size:11px;color:#6e6e6e;letter-spacing:-0.32px">Distance</div>
<div class="field" style="left:321px;top:422px;width:446px;height:20px;background:#f0f0f0;border-color:#bcbcbc;border-radius:3px"></div>
<div class="a" style="left:752px;top:423px;width:1px;height:18px;background:#c8c8c8"></div>
<svg style="left:755.3px;top:427px" width="7.4" height="3.7" viewBox="0 0 7.4 3.7"><path d="M0 3.7L3.7 0L7.4 3.7z" fill="#a4a4a4"/></svg>
<svg style="left:755.3px;top:434px" width="7.4" height="3.8" viewBox="0 0 7.4 3.8"><path d="M0 0L3.7 3.8L7.4 0z" fill="#a4a4a4"/></svg>
<div class="t" style="left:325px;top:428px;font-size:11px;color:#6e6e6e">0.0000</div>
<svg style="left:776px;top:424px" width="24" height="17" viewBox="0 0 24 17"><path d="M0 7.6L5.3 2V13z" fill="#d0d0d0" stroke="#c8c8c8" stroke-width="0.4"/><rect x="5.5" y="0.5" width="12" height="15" fill="#f7f7f7" stroke="#cacaca" stroke-width="1"/><path d="M5.5 7.5h12" stroke="#cacaca" stroke-width="1"/><path d="M8.3 4h7" stroke="#c4c4c4" stroke-width="1.8" stroke-linecap="round"/><path d="M8.3 11.5h7" stroke="#c4c4c4" stroke-width="1"/><path d="M16.5 11.2h6.6l-3.3 3.8z" fill="#c4c4c4"/></svg>
<div class="combo" style="left:321px;top:459px;width:446px;height:22px;border-color:#c9c9c9;background:linear-gradient(#f6f6f6,#efefef)"></div>
<div class="t" style="left:325px;top:466px;font-size:11px;color:#6e6e6e;letter-spacing:-0.32px">Millimeters</div>
<svg style="left:752.1px;top:468px" width="7.3" height="4" viewBox="0 0 7.3 4"><path d="M0 0L3.65 4L7.3 0z" fill="#a0a0a0"/></svg>
<svg style="left:776px;top:462px" width="24" height="17" viewBox="0 0 24 17"><path d="M0 7.6L5.3 2V13z" fill="#d0d0d0" stroke="#c8c8c8" stroke-width="0.4"/><rect x="5.5" y="0.5" width="12" height="15" fill="#f7f7f7" stroke="#cacaca" stroke-width="1"/><path d="M5.5 7.5h12" stroke="#cacaca" stroke-width="1"/><path d="M8.3 4h7" stroke="#c4c4c4" stroke-width="1.8" stroke-linecap="round"/><path d="M8.3 11.5h7" stroke="#c4c4c4" stroke-width="1"/><path d="M16.5 11.2h6.6l-3.3 3.8z" fill="#c4c4c4"/></svg>
<div class="t" style="left:274px;top:498px;font-size:11px;letter-spacing:-0.05px">Repeat</div>
<div class="field" style="left:315px;top:492px;width:452px;height:20px;border-radius:3px"></div>
<div class="a" style="left:752px;top:493px;width:14px;height:18px;background:linear-gradient(#fdfdfd,#f1f1f1);border-radius:0 2px 2px 0"></div>
<div class="a" style="left:752px;top:493px;width:1px;height:18px;background:#acacac"></div>
<svg style="left:755.3px;top:496.9px" width="7.4" height="3.7" viewBox="0 0 7.4 3.7"><path d="M0 3.7L3.7 0L7.4 3.7z" fill="#505050"/></svg>
<svg style="left:755.3px;top:503.9px" width="7.4" height="3.8" viewBox="0 0 7.4 3.8"><path d="M0 0L3.7 3.8L7.4 0z" fill="#9c9c9c"/></svg>
<div class="t" style="left:319px;top:498px;font-size:11px;letter-spacing:0px">No repeat</div>
<svg style="left:776px;top:494px" width="24" height="17" viewBox="0 0 24 17"><path d="M0 7.6L5.3 2V13z" fill="#8a8a8a" stroke="#555" stroke-width="0.4"/><rect x="5.5" y="0.5" width="12" height="15" fill="#fff" stroke="#767676" stroke-width="1"/><path d="M5.5 7.5h12" stroke="#767676" stroke-width="1"/><path d="M8.3 4h7" stroke="#404040" stroke-width="1.8" stroke-linecap="round"/><path d="M8.3 11.5h7" stroke="#404040" stroke-width="1"/><path d="M16.5 11.2h6.6l-3.3 3.8z" fill="#404040"/></svg>
<div class="combo" style="left:315px;top:529px;width:452px;height:22px"></div>
<div class="t" style="left:319px;top:536px;font-size:11px;letter-spacing:-0.27px">Points</div>
<svg style="left:752.1px;top:537.8px" width="7.3" height="4" viewBox="0 0 7.3 4"><path d="M0 0L3.65 4L7.3 0z" fill="#505050"/></svg>
<svg style="left:776px;top:532px" width="24" height="17" viewBox="0 0 24 17"><path d="M0 7.6L5.3 2V13z" fill="#8a8a8a" stroke="#555" stroke-width="0.4"/><rect x="5.5" y="0.5" width="12" height="15" fill="#fff" stroke="#767676" stroke-width="1"/><path d="M5.5 7.5h12" stroke="#767676" stroke-width="1"/><path d="M8.3 4h7" stroke="#404040" stroke-width="1.8" stroke-linecap="round"/><path d="M8.3 11.5h7" stroke="#404040" stroke-width="1"/><path d="M16.5 11.2h6.6l-3.3 3.8z" fill="#404040"/></svg>
<div class="t" style="left:274px;top:568px;font-size:11px;letter-spacing:0.09px">Overrun feature</div>
<div class="field" style="left:359px;top:562px;width:408px;height:20px;border-radius:3px"></div>
<div class="a" style="left:752px;top:563px;width:14px;height:18px;background:linear-gradient(#fdfdfd,#f1f1f1);border-radius:0 2px 2px 0"></div>
<div class="a" style="left:752px;top:563px;width:1px;height:18px;background:#acacac"></div>
<svg style="left:755.3px;top:566.9px" width="7.4" height="3.7" viewBox="0 0 7.4 3.7"><path d="M0 3.7L3.7 0L7.4 3.7z" fill="#505050"/></svg>
<svg style="left:755.3px;top:573.9px" width="7.4" height="3.8" viewBox="0 0 7.4 3.8"><path d="M0 0L3.7 3.8L7.4 0z" fill="#9c9c9c"/></svg>
<div class="t" style="left:363px;top:568px;font-size:11px;letter-spacing:0px">No overrun</div>
<svg style="left:776px;top:564px" width="24" height="17" viewBox="0 0 24 17"><path d="M0 7.6L5.3 2V13z" fill="#8a8a8a" stroke="#555" stroke-width="0.4"/><rect x="5.5" y="0.5" width="12" height="15" fill="#fff" stroke="#767676" stroke-width="1"/><path d="M5.5 7.5h12" stroke="#767676" stroke-width="1"/><path d="M8.3 4h7" stroke="#404040" stroke-width="1.8" stroke-linecap="round"/><path d="M8.3 11.5h7" stroke="#404040" stroke-width="1"/><path d="M16.5 11.2h6.6l-3.3 3.8z" fill="#404040"/></svg>
<div class="combo" style="left:359px;top:597px;width:408px;height:22px"></div>
<div class="t" style="left:363px;top:604px;font-size:11px;letter-spacing:-0.32px">Millimeters</div>
<svg style="left:752.1px;top:605.8px" width="7.3" height="4" viewBox="0 0 7.3 4"><path d="M0 0L3.65 4L7.3 0z" fill="#505050"/></svg>
<div class="a" style="left:274px;top:634px;width:529px;height:1px;background:#a0a0a0"></div>
<svg style="left:277px;top:657px" width="11" height="7" viewBox="0 0 11 7"><path d="M0 0h11L5.5 7z" fill="#333"/></svg>
<div class="cb" style="left:294px;top:651px"></div>
<div class="t" style="left:315px;top:653px;font-size:12px;font-weight:bold">Geometry generator</div>
<div class="a" style="left:275px;top:669px;width:528px;height:63px;background:#ececec;border:1px solid #d9d9d9;border-bottom:none;border-radius:2px 2px 0 0"></div>
<div class="a" style="left:277px;top:680px;width:491px;height:52px;background:#f0f0f0;border:1px solid #b4b4b4;border-bottom:none"></div>
<div class="a" style="left:278px;top:681px;width:14px;height:51px;background:#f5f5f5"></div>
<div class="btn" style="left:774px;top:680px;width:26px;height:20px"></div>
<div class="t" style="left:781px;top:686px;font-size:11px;color:#444;letter-spacing:1.2px">...</div>
<div class="a" style="left:809px;top:239px;width:14px;height:493px;background:linear-gradient(90deg,#fbfbfb,#f0f0f0);border-left:1px solid #c2c2c2"></div>
<div class="a" style="left:810px;top:252px;width:13px;height:1px;background:#c8c8c8"></div>
<svg style="left:812.2px;top:242.6px" width="7.6" height="4.2" viewBox="0 0 7.6 4.2"><path d="M0 4.2L3.8 0L7.6 4.2z" fill="#4a4a4a"/></svg>
<div class="a" style="left:810px;top:524px;width:13px;height:194px;background:#e6e6e6;border-top:1px solid #c4c4c4"></div>
<div class="a" style="left:810px;top:717px;width:13px;height:1px;background:#c8c8c8"></div>
<svg style="left:812.2px;top:721.5px" width="7.6" height="4.2" viewBox="0 0 7.6 4.2"><path d="M0 0L3.8 4.2L7.6 0z" fill="#4a4a4a"/></svg>
<div class="a" style="left:270px;top:731px;width:553px;height:1px;background:#f0f0f0"></div>
<div class="btn" style="left:155px;top:737px;width:80px;height:21px;"></div>
<div class="t" style="left:155px;top:743px;font-size:11px;width:66px;text-align:center">Style</div>
<svg style="left:223.6px;top:745.6px" width="5.8" height="3.4" viewBox="0 0 5.8 3.4"><path d="M0 0L2.9 3.4L5.8 0z" fill="#707070"/></svg>
<div class="t" style="left:155px;top:742px;"></div>
<div class="btn" style="left:485px;top:737px;width:80px;height:21px;"></div>
<div class="t" style="left:485px;top:743px;font-size:11px;width:80px;text-align:center">OK</div>
<div class="btn" style="left:571px;top:737px;width:80px;height:21px;"></div>
<div class="t" style="left:571px;top:743px;font-size:11px;width:80px;text-align:center">Cancel</div>
<div class="btn" style="left:657px;top:737px;width:80px;height:21px;border-color:#3c94e6;background:linear-gradient(#f4f9fe,#e3eefa)"></div>
<div class="t" style="left:657px;top:743px;font-size:11px;width:80px;text-align:center">Apply</div>
<div class="btn" style="left:743px;top:737px;width:80px;height:21px;"></div>
<div class="t" style="left:743px;top:743px;font-size:11px;width:80px;text-align:center">Help</div>
<div class="a" style="left:151px;top:761px;width:676px;height:1px;background:#555"></div>
</body></html>
